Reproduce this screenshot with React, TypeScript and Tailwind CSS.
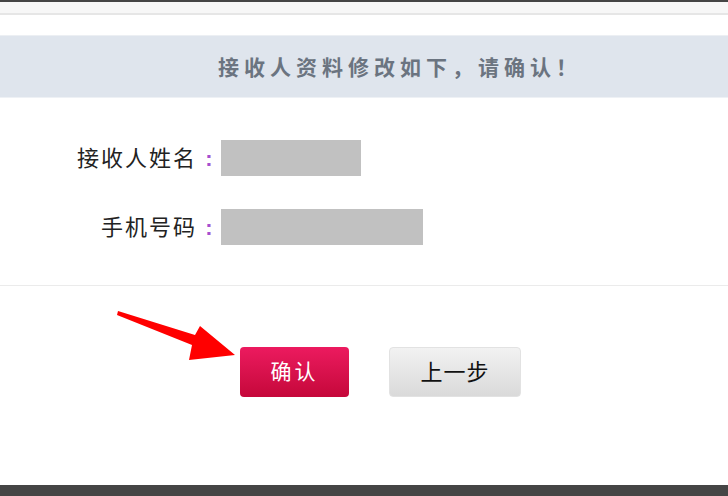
import React from 'react';

const font = { fontFamily: '"Liberation Sans", "Noto Sans CJK SC", sans-serif' };

const Arrow: React.FC = () => (
  <svg className="absolute left-0 top-0" width="728" height="496" viewBox="0 0 728 496">
    <polygon
      points="118,311 195,335 200,326 235,355 189,360 192,345 117,315"
      fill="#ff0000"
    />
  </svg>
);

const Row: React.FC<{ label: string; width: string }> = ({ label, width }) => (
  <div className="flex items-center">
    <div className="w-[197px] text-right text-[22px] tracking-[2px] text-[#222]">{label}</div>
    <div className="w-[24px] text-center text-[22px] font-bold text-[#a64fd0]">:</div>
    <div className={`${width} h-[36px] bg-[#c1c1c1]`}></div>
  </div>
);

const App: React.FC = () => {
  return (
    <div className="relative w-[728px] h-[496px] flex flex-col bg-white overflow-hidden" style={font}>
      <div className="h-[2px] bg-[#454545]"></div>
      <div className="h-[11px] bg-[#f7f7f7]"></div>
      <div className="h-[2px] bg-[#e6e6e6]"></div>
      <div className="h-[20px] bg-white"></div>
      <div className="h-[1px] bg-[#eceff3]"></div>
      <div className="h-[61px] bg-[#dfe5ed] flex items-center pl-[218px]">
        <span className="text-[21px] font-bold tracking-[5px] text-[#6b7480]" style={{ fontFamily: '"Noto Sans CJK SC", sans-serif' }}>
          接收人资料修改如下，请确认！
        </span>
      </div>
      <div className="h-[1px] bg-[#eef1f5]"></div>

      <div className="flex flex-col gap-[33px] pt-[42px] h-[187px]">
        <Row label="接收人姓名" width="w-[140px]" />
        <Row label="手机号码" width="w-[202px]" />
      </div>
      <div className="h-[1px] bg-[#ebebeb]"></div>

      <div className="flex gap-[40px] pl-[240px] pt-[61px]">
        <button className="w-[109px] h-[50px] rounded-[4px] bg-gradient-to-b from-[#ec1a5f] to-[#c5073a] text-white text-[21px] tracking-[3px]">
          确认
        </button>
        <button className="w-[132px] h-[50px] rounded-[4px] border border-[#e2e2e2] bg-gradient-to-b from-[#f2f2f2] to-[#dadada] text-[#111] text-[22px] tracking-[1px]">
          上一步
        </button>
      </div>

      <div className="flex-1"></div>
      <div className="h-[11px] bg-[#454545]"></div>
      <Arrow />
    </div>
  );
};

export default App;
